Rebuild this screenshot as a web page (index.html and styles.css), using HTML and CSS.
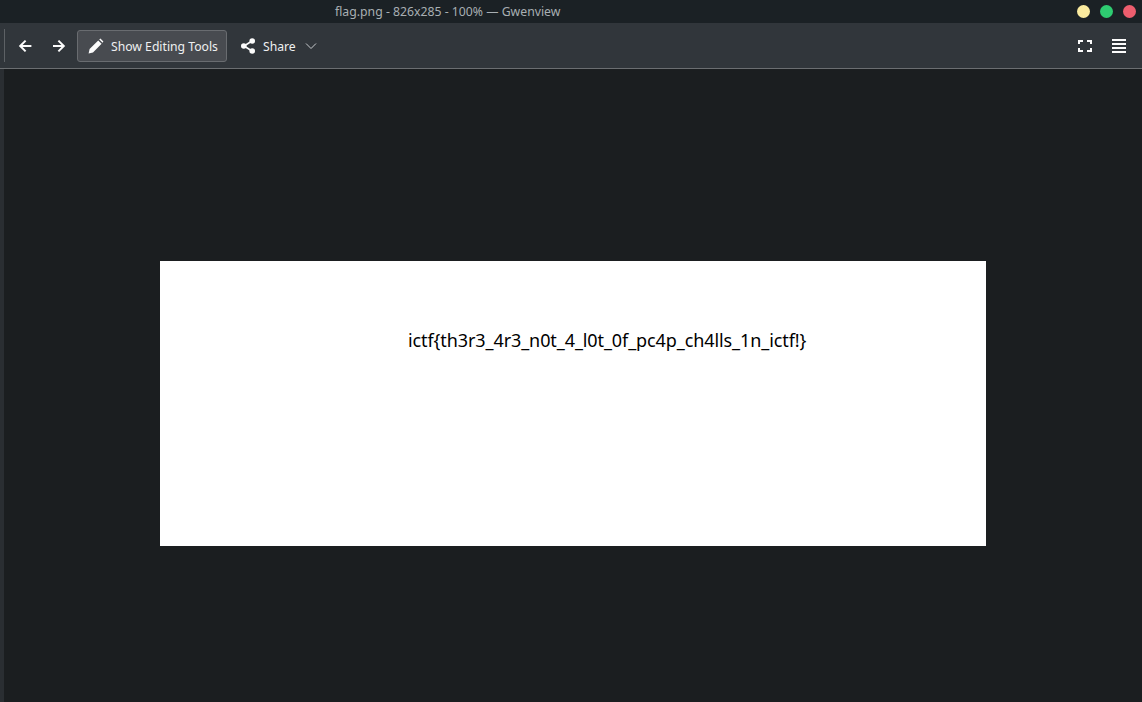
FILE: index.html
```html
<!DOCTYPE html>
<html lang="en">
<head>
<meta charset="utf-8">
<title>flag.png - Gwenview</title>
<link rel="stylesheet" href="styles.css">
</head>
<body>
<div class="window">
  <header class="titlebar">
    <span class="title">flag.png - 826x285 - 100% — Gwenview</span>
    <div class="controls">
      <span class="dot dot-min"></span>
      <span class="dot dot-max"></span>
      <span class="dot dot-close"></span>
    </div>
  </header>
  <nav class="toolbar">
    <span class="handle"></span>
    <button class="tool icon-tool nav-first" aria-label="Back">
      <svg width="16" height="16" viewBox="0 0 16 16"><path d="M14.4 8H4M8.6 2.6 3.2 8l5.4 5.4" fill="none" stroke="#fcfcfc" stroke-width="2"/></svg>
    </button>
    <button class="tool icon-tool nav-next" aria-label="Forward">
      <svg width="16" height="16" viewBox="0 0 16 16"><path d="M2 8h10.4M7.4 2.6 12.8 8l-5.4 5.4" fill="none" stroke="#fcfcfc" stroke-width="2"/></svg>
    </button>
    <button class="tool edit">
      <svg width="16" height="16" viewBox="0 0 16 16"><path d="M0.6 15.4 1.6 11 10.2 2.4 13.6 5.8 5 14.4ZM11.2 1.4 12.4 0.4 15.4 3.4 14.6 4.8Z" fill="#fcfcfc"/></svg>
      <span class="label">Show Editing Tools</span>
    </button>
    <button class="tool share">
      <svg width="16" height="16" viewBox="0 0 16 16"><path d="M12 3 4 8l8 5" fill="none" stroke="#fcfcfc" stroke-width="1.6"/><circle cx="12.2" cy="3" r="2.8" fill="#fcfcfc"/><circle cx="3.8" cy="8" r="2.8" fill="#fcfcfc"/><circle cx="12.2" cy="13" r="2.8" fill="#fcfcfc"/></svg>
      <span class="label">Share</span>
      <svg class="chevron" width="12" height="8" viewBox="0 0 12 8"><path d="M1 1.5 6 6.5 11 1.5" fill="none" stroke="#c8cbce" stroke-width="1"/></svg>
    </button>
    <div class="spacer"></div>
    <button class="tool icon-tool" aria-label="Full screen">
      <svg width="14" height="12" viewBox="0 0 14 12"><path d="M1 4V1h4M9 1h4v3M13 8v3H9M5 11H1V8" fill="none" stroke="#fcfcfc" stroke-width="2"/></svg>
    </button>
    <button class="tool icon-tool menu" aria-label="Menu">
      <svg width="14" height="14" viewBox="0 0 14 14"><path d="M0 1h14M0 5h14M0 9h14M0 13h14" fill="none" stroke="#fcfcfc" stroke-width="2"/></svg>
    </button>
  </nav>
  <main class="viewer">
    <div class="stripe"></div>
    <div class="canvas">
      <div class="image"><p class="flag">ictf{th3r3_4r3_n0t_4_l0t_0f_pc4p_ch4lls_1n_ictf!}</p></div>
    </div>
  </main>
</div>
</body>
</html>
```

FILE: styles.css
```css
* { box-sizing: border-box; }
html, body { margin: 0; height: 100%; background: #1b1e20; overflow: hidden; }
body { font-family: "Noto Sans", sans-serif; font-size: 12.2px; color: #fcfcfc; }
.window { display: flex; flex-direction: column; width: 1142px; height: 702px; }

.titlebar { flex: 0 0 23px; background: #1b2125; display: flex; align-items: center; }
.title { margin-left: 335px; color: #a8afb3; font-size: 12.25px; line-height: 23px; white-space: nowrap; }
.controls { margin-left: auto; margin-right: 6px; display: flex; gap: 10px; }
.dot { width: 13px; height: 13px; border-radius: 50%; }
.dot-min { background: #fbeb9f; }
.dot-max { background: #2ecc71; }
.dot-close { background: #ed5e6e; }

.toolbar { flex: 0 0 46px; background: #31363b; border-bottom: 1px solid #6b6e71; display: flex; align-items: center; }
.handle { width: 1px; height: 33px; background: #5d6165; margin-left: 4px; }
.tool { font: inherit; color: #fcfcfc; background: none; border: 1px solid transparent; border-radius: 3px; padding: 0; height: 32px; display: flex; align-items: center; }
.icon-tool { width: 32px; justify-content: center; }
.nav-first { margin-left: 4px; }
.nav-next { margin-left: 2px; }
.edit { width: 150px; margin-left: 2px; padding-left: 10px; gap: 7px; background: #484b50; border-color: #696c70; color: #eff0f1; }
.share { margin-left: 4px; padding-left: 8px; gap: 7px; color: #eff0f1; }
.label { padding-top: 2px; }
.chevron { margin-left: 2px; }
.spacer { flex: 1; }
.menu { margin-left: 2px; margin-right: 7px; }

.viewer { flex: 1; display: flex; min-height: 0; }
.stripe { flex: 0 0 4px; background: #2a2e32; }
.canvas { flex: 1; background: #1b1e20; padding-top: 192px; padding-left: 156px; }
.image { width: 826px; height: 285px; background: #fff; padding: 66px 0 0 248px; }
.flag { margin: 0; color: #000; font-size: 18px; letter-spacing: -0.09px; line-height: 26px; white-space: nowrap; }
```
